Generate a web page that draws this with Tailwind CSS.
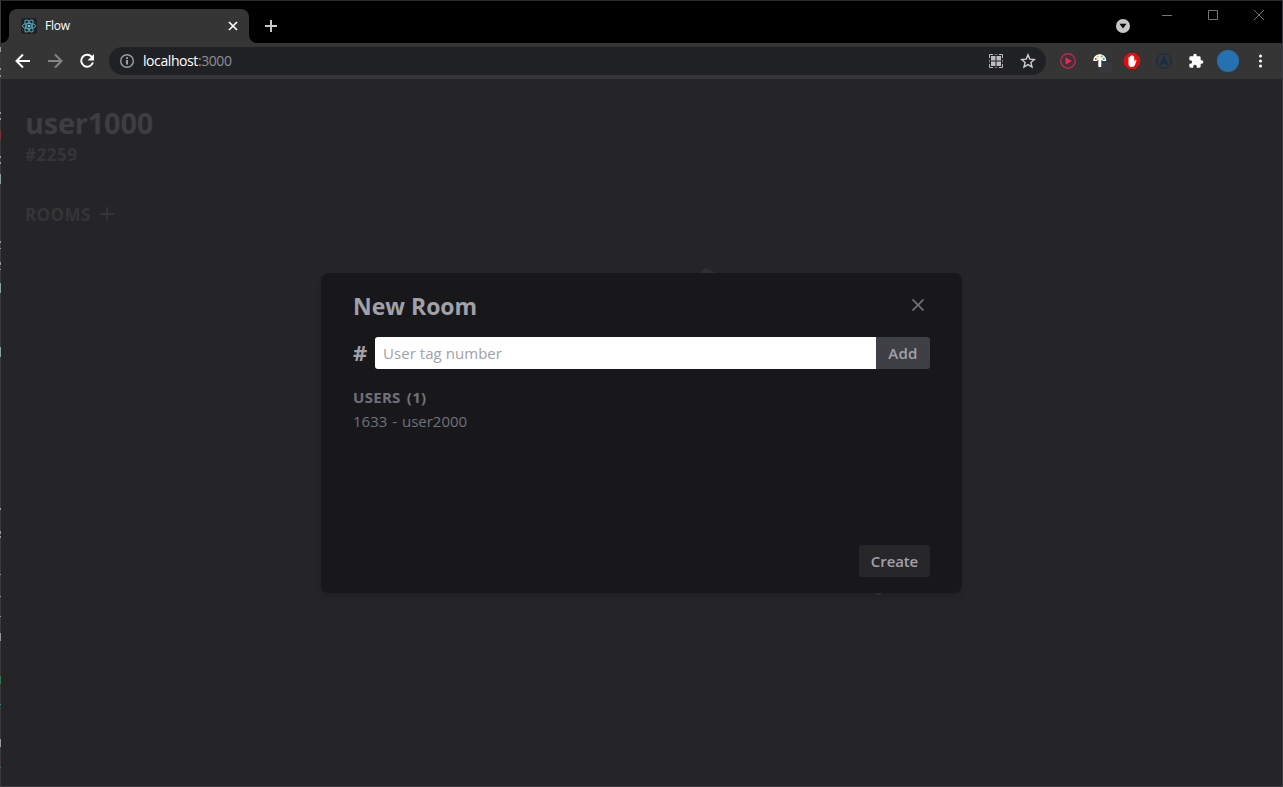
<!DOCTYPE html>
<html lang="en">
<head>
<meta charset="utf-8">
<title>Flow</title>
<script src="https://cdn.jsdelivr.net/npm/@tailwindcss/browser@4"></script>
</head>
<body class="h-[787px] w-[1283px] overflow-hidden bg-[#3a3a3b] font-['Open_Sans','Noto_Sans',sans-serif]">
<div class="relative flex h-[787px] flex-col border border-[#303032] border-t-[#2b2b2b] border-r-[#3c3c3e] border-b-[#3c3c3e] border-l-[#3a3a3b] bg-[#252527]">

  <!-- tab strip -->
  <div class="flex h-[42px] shrink-0 bg-black">
    <div class="flex w-2 items-end bg-[#353535]"><div class="h-full w-2 rounded-br-lg bg-black"></div></div>
    <div class="flex w-[240px] flex-col bg-black pt-2">
      <div class="flex h-[34px] items-center rounded-t-lg bg-[#353535] pr-[10px] pl-3">
        <svg class="h-4 w-4" viewBox="0 0 16 16" fill="none"><rect width="16" height="16" rx="1.5" fill="#222325"/><g stroke="#52a9bf" stroke-width="1"><ellipse cx="8" cy="8" rx="6.6" ry="2.6"/><ellipse cx="8" cy="8" rx="6.6" ry="2.6" transform="rotate(60 8 8)"/><ellipse cx="8" cy="8" rx="6.6" ry="2.6" transform="rotate(120 8 8)"/></g><circle cx="8" cy="8" r="1.3" fill="#61dafb"/></svg>
        <span class="ml-2 flex-1 text-[12px] tracking-[-0.2px] text-white">Flow</span>
        <svg class="h-3 w-3" viewBox="0 0 12 12" stroke="#fff" stroke-width="1.7"><path d="M2 2l8 8M10 2l-8 8"/></svg>
      </div>
    </div>
    <div class="w-2 bg-[#353535]"><div class="h-full w-2 rounded-bl-lg bg-black"></div></div>
    <svg class="mt-[18px] ml-[7px] h-[14px] w-[14px]" viewBox="0 0 14 14" stroke="#c8c8c8" stroke-width="2"><path d="M7 1v12M1 7h12"/></svg>
    <div class="flex-1"></div>
    <svg class="mt-[18px] mr-8 h-[14px] w-[14px]" viewBox="0 0 14 14"><circle cx="7" cy="7" r="7" fill="#c6c6c6"/><path d="M3.500 4.800h7L7 9.600z" fill="#000"/></svg>
    <svg class="mt-2 h-[12px] w-[104px]" viewBox="0 0 104 12" fill="none" stroke="#777"><path d="M0 6.5h10"/><path d="M46.500 1.500h9v9h-9z"/><path d="M92 1l10 10M102 1L92 11"/></svg>
    <div class="w-[16px]"></div>
  </div>

  <!-- toolbar -->
  <div class="flex h-9 shrink-0 items-center bg-[#353535]">
    <svg class="ml-[14px] h-4 w-4" viewBox="0 0 16 16" fill="none" stroke="#fff" stroke-width="2"><path d="M15 8H2.200M8 1.500L1.500 8 8 14.500"/></svg>
    <svg class="ml-4 h-4 w-4" viewBox="0 0 16 16" fill="none" stroke="#868686" stroke-width="2"><path d="M1 8h12.800M8 1.500L14.500 8 8 14.500"/></svg>
    <svg class="ml-4 h-4 w-4" viewBox="0 0 16 16" fill="none"><path d="M13.300 4.600A6 6 0 1 0 13.900 9.500" stroke="#fff" stroke-width="2"/><path d="M15 1v6.500H8.500z" fill="#fff"/></svg>
    <div class="ml-[14px] flex h-7 w-[937px] items-center rounded-full bg-[#202124] pr-[10px] pl-[11px]">
      <svg class="h-[14px] w-[14px]" viewBox="0 0 14 14" fill="none" stroke="#9aa0a6"><circle cx="7" cy="7" r="6.300" stroke-width="1.400"/><path d="M7 6v4.500M7 3.300v1.700" stroke-width="2"/></svg>
      <span class="relative -top-px ml-[9px] flex-1 text-[14px] tracking-[-0.42px] text-white">localhost<span class="text-[#8c9095]">:3000</span></span>
      <svg class="h-[14px] w-[14px]" viewBox="0 0 14 14" fill="none" stroke="#bcbcbc"><path d="M.5 4V.5H4M10 .5h3.500V4M13.500 10v3.500H10M4 13.500H.5V10"/><path d="M5.500.5h3M13.500 5.500v3M8.500 13.500h-3M.5 8.500v-3" stroke="#777"/><path d="M2 2h4.500v4.500H2zM7.500 2H12v4.500H7.500zM2 7.500h4.500V12H2zM7.500 7.500H12V12H7.500z" fill="#bcbcbc" stroke="none"/></svg>
      <svg class="ml-[17px] h-4 w-4" viewBox="0 0 16 16" fill="none" stroke="#d0d0d0" stroke-width="1.400"><path d="M8 1.900l1.800 4.200 4.600.4-3.500 3 1.100 4.500L8 11.600 4 14l1.100-4.500-3.500-3 4.600-.4z"/></svg>
    </div>
    <svg class="ml-[14px] h-4 w-4" viewBox="0 0 16 16"><circle cx="8" cy="8" r="7.200" fill="none" stroke="#c0264f" stroke-width="1.500"/><path d="M5.500 4.200L12 8l-6.500 3.800z" fill="#e8265a"/></svg>
    <svg class="ml-4 h-[22px] w-[22px]" viewBox="0 0 22 22"><rect x="8" y="13" width="12" height="9" rx="2" fill="#38393f"/><path d="M1.300 11C1 2 14.500 2 14.200 11H11L9.300 10v6.500q-1.500 1.500-3 0V10L4.500 11z" fill="#fff"/><circle cx="3.800" cy="8.800" r="1.100" fill="#e43"/><circle cx="5.800" cy="6.500" r="1.100" fill="#fb3"/><circle cx="9.600" cy="6.500" r="1.100" fill="#5b5"/><circle cx="11.700" cy="8.800" r="1.100" fill="#2ac"/></svg>
    <svg class="ml-[10px] h-4 w-4" viewBox="0 0 16 16"><path d="M4.700 0h6.600L16 4.700v6.600L11.300 16H4.700L0 11.300V4.700z" fill="#e20d0d"/><path d="M4.500 8.500V4.600q.8-1 1.400 0V3.200q.7-1 1.400 0v-.7q.8-1 1.500 0v.9q.8-.9 1.400 0v5l1.200-1.600q1.200-.2 1.100.7L11 12q-1 2-3.300 2-3.200-.3-3.200-3z" fill="#fff"/></svg>
    <svg class="ml-4 h-4 w-4" viewBox="0 0 16 16" fill="none" stroke="#192c47"><circle cx="8" cy="8" r="7.300" stroke-width="1.300"/><path d="M4.800 11.800L8 4.500l3.200 7.300M6 9.500h4" stroke-width="1.900"/></svg>
    <svg class="ml-4 h-4 w-4" viewBox="0 0 24 24" fill="#fff"><path d="M20.500 11H19V7a2 2 0 0 0-2-2h-4V3.500a2.500 2.500 0 0 0-5 0V5H4a2 2 0 0 0-2 2v3.800h1.500a2.700 2.700 0 0 1 0 5.400H2V20a2 2 0 0 0 2 2h3.800v-1.500a2.700 2.700 0 0 1 5.400 0V22H17a2 2 0 0 0 2-2v-4h1.500a2.500 2.500 0 0 0 0-5z"/></svg>
    <div class="ml-[13px] h-[22px] w-[22px] rounded-full bg-[#2571b1]"></div>
    <svg class="ml-[20px] h-4 w-[3px]" viewBox="0 0 3 16" fill="#fff"><circle cx="1.500" cy="3" r="1.500"/><circle cx="1.500" cy="8" r="1.500"/><circle cx="1.500" cy="13" r="1.500"/></svg>
  </div>

  <!-- page -->
  <main class="flex flex-1 flex-col px-6 pt-[26px]">
    <h1 class="text-[29px] leading-9 font-bold tracking-[-0.25px] text-[#3d3d42]">user1000</h1>
    <p class="text-[17px] leading-7 font-bold tracking-[0.5px] text-[#353538]">#2259</p>
    <div class="mt-8 flex items-center text-[#353538]">
      <h2 class="text-[17px] leading-7 font-bold tracking-[0.4px]">ROOMS</h2>
      <svg class="mb-[2px] ml-[9px] h-[14px] w-[14px]" viewBox="0 0 14 14" stroke="currentColor" stroke-width="1.800"><path d="M7 0v14M0 7h14"/></svg>
    </div>
  </main>

  <!-- backdrop illustration peeking out around the dialog -->
  <svg class="absolute top-[266px] left-[699px] h-8 w-5" viewBox="0 0 20 32" fill="#303032"><path d="M0 7Q3 0 9 2l11 6v10H0z"/></svg>
  <svg class="absolute top-[588px] left-[873px] h-[7px] w-[10px]" viewBox="0 0 10 7" fill="#343436"><path d="M1 0h9L7 6H2z"/></svg>

  <!-- dialog -->
  <section class="absolute top-[272px] left-[320px] flex h-[320px] w-[641px] flex-col rounded-lg bg-[#18181a] px-8 py-4 shadow-md shadow-black/10">
    <header class="flex h-8 items-center justify-between">
      <h2 class="pt-[2px] text-[23px] leading-8 font-bold text-[#a1a1aa]">New Room</h2>
      <svg class="mr-[6px] h-3 w-3" viewBox="0 0 12 12" stroke="#71717a" stroke-width="1.700"><path d="M.5.5l11 11M11.500.5l-11 11"/></svg>
    </header>
    <div class="mt-4 flex h-8 items-center">
      <span class="w-[22px] pb-[3px] text-[22px] leading-8 font-bold text-[#a1a1aa]">#</span>
      <div class="flex h-8 flex-1 items-center rounded-l-[3px] bg-white px-2 text-[15px] text-[#a1a1aa]"><span class="tracking-[0.05px]">User tag number</span></div>
      <button class="h-8 w-[54px] rounded-r-[3px] bg-[#3f3f46] text-[15px] font-semibold tracking-[0.3px] text-[#a1a1aa]">Add</button>
    </div>
    <h3 class="mt-4 text-[15px] leading-6 font-bold tracking-[0.3px] [word-spacing:2px] text-[#71717a]">USERS (1)</h3>
    <p class="text-[15px] leading-6 [word-spacing:1px] text-[#71717a]">1633 - user2000</p>
    <div class="flex-1"></div>
    <button class="h-8 w-[71px] self-end rounded-[3px] bg-[#27272a] text-[15px] font-semibold tracking-[-0.1px] text-[#a1a1aa]">Create</button>
  </section>

  <!-- sliver of the window behind, along the left edge -->
  <svg class="absolute top-[-1px] left-[-1px] h-[787px] w-px" viewBox="0 0 1 787" shape-rendering="crispEdges"><path d="M0 47h1v5H0zM0 68h1v2H0zM0 75h1v2H0zM0 112h1v2H0zM0 118h1v2H0zM0 156h1v2H0zM0 162h1v2H0zM0 241h1v2H0zM0 248h1v1H0zM0 262h1v3H0zM0 269h1v1H0zM0 508h1v2H0zM0 531h1v3H0zM0 536h1v2H0zM0 574h1v1H0zM0 596h1v1H0zM0 616h1v1H0zM0 633h1v8H0zM0 739h1v8H0z" fill="#98989a"/><path d="M0 174h1v10H0zM0 283h1v10H0zM0 347h1v10H0z" fill="#8aa0a2"/><path d="M0 130h1v9H0z" fill="#7c3038"/><path d="M0 676h1v8H0zM0 767h1v1H0z" fill="#2f7a50"/><path d="M0 704h1v1H0z" fill="#2592b0"/></svg>
</div>
</body>
</html>
